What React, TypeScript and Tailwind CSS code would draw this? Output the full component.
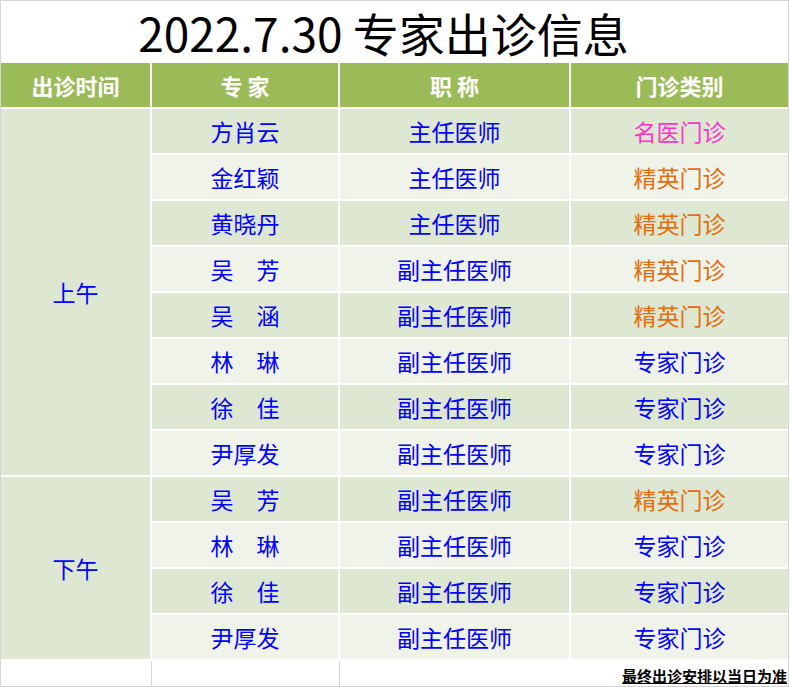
import React from "react";

type Row = { name: string; title: string; kind: string };

const MORNING: Row[] = [
  { name: "方肖云", title: "主任医师", kind: "名医门诊" },
  { name: "金红颖", title: "主任医师", kind: "精英门诊" },
  { name: "黄晓丹", title: "主任医师", kind: "精英门诊" },
  { name: "吴　芳", title: "副主任医师", kind: "精英门诊" },
  { name: "吴　涵", title: "副主任医师", kind: "精英门诊" },
  { name: "林　琳", title: "副主任医师", kind: "专家门诊" },
  { name: "徐　佳", title: "副主任医师", kind: "专家门诊" },
  { name: "尹厚发", title: "副主任医师", kind: "专家门诊" },
];

const AFTERNOON: Row[] = [
  { name: "吴　芳", title: "副主任医师", kind: "精英门诊" },
  { name: "林　琳", title: "副主任医师", kind: "专家门诊" },
  { name: "徐　佳", title: "副主任医师", kind: "专家门诊" },
  { name: "尹厚发", title: "副主任医师", kind: "专家门诊" },
];

function kindColor(kind: string) {
  if (kind === "名医门诊") return "text-[#ff33cc]";
  if (kind === "精英门诊") return "text-[#e46c0a]";
  return "text-[#0000ff]";
}

function DataRows({ rows, start }: { rows: Row[]; start: number }) {
  return (
    <>
      {rows.map((r, i) => {
        const bg = (start + i) % 2 === 0 ? "bg-[#dee7d1]" : "bg-[#eff3ea]";
        return (
          <React.Fragment key={start + i}>
            <div className={`${bg} col-start-2 flex items-center justify-center text-[#0000ff]`}>{r.name}</div>
            <div className={`${bg} flex items-center justify-center text-[#0000ff]`}>{r.title}</div>
            <div className={`${bg} flex items-center justify-center ${kindColor(r.kind)}`}>{r.kind}</div>
          </React.Fragment>
        );
      })}
    </>
  );
}

export default function App() {
  return (
    <div
      className="w-[789px] h-[687px] border border-[#d4d4d4] bg-white flex flex-col"
      style={{ fontFamily: '"Noto Sans CJK SC", "Noto Sans", sans-serif' }}
    >
      {/* Title */}
      <div className="h-[62px] flex items-center justify-center pr-[22px]">
        <h1 className="text-[46px] leading-none text-black">2022.7.30 专家出诊信息</h1>
      </div>

      {/* Table */}
      <div className="grid grid-cols-[149px_186px_229px_1fr] grid-rows-[repeat(13,44px)] gap-[2px] text-[23px]">
        <div className="bg-[#9bbb59] flex items-center justify-center text-white font-bold text-[22px]">出诊时间</div>
        <div className="bg-[#9bbb59] flex items-center justify-center text-white font-bold text-[22px]">专 家</div>
        <div className="bg-[#9bbb59] flex items-center justify-center text-white font-bold text-[22px]">职 称</div>
        <div className="bg-[#9bbb59] flex items-center justify-center text-white font-bold text-[22px]">门诊类别</div>

        <div className="bg-[#dee7d1] row-span-8 col-start-1 row-start-2 flex items-center justify-center text-[#0000ff]">上午</div>
        <DataRows rows={MORNING} start={0} />

        <div className="bg-[#dee7d1] row-span-4 col-start-1 row-start-10 flex items-center justify-center text-[#0000ff]">下午</div>
        <DataRows rows={AFTERNOON} start={0} />
      </div>

      {/* Footer */}
      <div className="mt-[2px] h-[25px] flex">
        <div className="w-[151px] border-r border-[#d4d4d4]" />
        <div className="w-[188px] border-r border-[#d4d4d4]" />
        <div className="flex-1 flex items-end justify-end pr-[1px]">
          <span className="text-[15px] font-bold underline leading-[20px] text-black">最终出诊安排以当日为准</span>
        </div>
      </div>
    </div>
  );
}
